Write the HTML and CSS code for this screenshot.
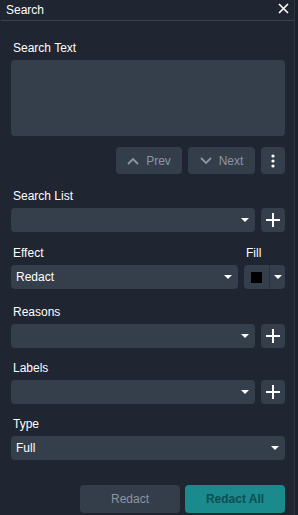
FILE: index.html
```html
<!DOCTYPE html>
<html lang="en">
  <head>
    <meta charset="UTF-8" />
    <meta name="viewport" content="width=device-width, initial-scale=1.0" />
    <title>Search</title>
    <link rel="stylesheet" href="styles.css">
  </head>
  <body>
    <div class="panel">
      <div class="header">
        <span class="title">Search</span>
        <button class="close" aria-label="Close">
          <svg width="11" height="11" viewBox="0 0 11 11"><path d="M1 1L10 10M10 1L1 10" stroke="#fff" stroke-width="1.6"/></svg>
        </button>
      </div>

      <div class="content">
        <!-- Search text -->
        <div class="label first">Search Text</div>
        <div class="textarea"></div>

        <div class="nav">
          <button class="nav-btn prev">
            <svg width="12" height="8" viewBox="0 0 12 8"><path d="M1 7L6 2L11 7" fill="none" stroke="#8b95a2" stroke-width="1.8"/></svg>
            Prev
          </button>
          <button class="nav-btn next">
            <svg width="12" height="8" viewBox="0 0 12 8"><path d="M1 1L6 6L11 1" fill="none" stroke="#8b95a2" stroke-width="1.8"/></svg>
            Next
          </button>
          <button class="square-btn kebab">
            <svg width="4" height="14" viewBox="0 0 4 14"><circle cx="2" cy="2" r="1.6" fill="#fff"/><circle cx="2" cy="7" r="1.6" fill="#fff"/><circle cx="2" cy="12" r="1.6" fill="#fff"/></svg>
          </button>
        </div>

        <!-- Search list -->
        <div class="label after-nav">Search List</div>
        <div class="row">
          <div class="select"><span></span><i class="caret"></i></div>
          <button class="square-btn plus"><svg width="14" height="14" viewBox="0 0 14 14"><path d="M7 0V14M0 7H14" stroke="#fff" stroke-width="2"/></svg></button>
        </div>

        <!-- Effect -->
        <div class="label-row">
          <span class="label">Effect</span>
          <span class="label fill-label">Fill</span>
        </div>
        <div class="row effect-row">
          <div class="select"><span>Redact</span><i class="caret"></i></div>
          <div class="fill-btn">
            <span class="swatch-wrap"><span class="swatch"></span></span>
            <span class="fill-caret"><i class="caret"></i></span>
          </div>
        </div>

        <!-- Reasons -->
        <div class="label">Reasons</div>
        <div class="row">
          <div class="select"><span></span><i class="caret"></i></div>
          <button class="square-btn plus"><svg width="14" height="14" viewBox="0 0 14 14"><path d="M7 0V14M0 7H14" stroke="#fff" stroke-width="2"/></svg></button>
        </div>

        <!-- Labels -->
        <div class="label">Labels</div>
        <div class="row">
          <div class="select"><span></span><i class="caret"></i></div>
          <button class="square-btn plus"><svg width="14" height="14" viewBox="0 0 14 14"><path d="M7 0V14M0 7H14" stroke="#fff" stroke-width="2"/></svg></button>
        </div>

        <!-- Type -->
        <div class="label">Type</div>
        <div class="row">
          <div class="select"><span>Full</span><i class="caret"></i></div>
        </div>

        <div class="footer">
          <button class="action redact">Redact</button>
          <button class="action redact-all">Redact All</button>
        </div>
      </div>
    </div>
  </body>
</html>
```

FILE: styles.css
```css
body {
  margin: 0;
  padding: 0;
  background-color: #1b212a;
  font-family: "Liberation Sans", Arial, sans-serif;
  font-size: 12px;
  color: #fff;
}

button {
  font-family: inherit;
  border: none;
  padding: 0;
  cursor: pointer;
}

.panel {
  width: 294px;
  height: 515px;
  background-color: #1f2531;
  border-right: 1px solid #2e3540;
}

.header {
  height: 20px;
  border-bottom: 1px solid #3a4351;
  display: flex;
  align-items: center;
  justify-content: space-between;
  padding: 0 5px 0 6px;
  margin-left: 1px;
}

.title {
  font-size: 12px;
  color: #fff;
  margin-left: -1px;
}

.close {
  background: none;
  display: flex;
  margin-top: -3px;
}

.content {
  padding: 20px 9px 0 11px;
}

.label {
  display: block;
  height: 14px;
  line-height: 14px;
  margin-left: 2px;
  margin-top: 13px;
  color: #fff;
}

.label.first {
  margin-top: 0;
}

.label.after-nav {
  margin-top: 15px;
}

.label-row {
  display: flex;
  justify-content: space-between;
  margin-top: 14px;
}

.label-row .label {
  margin-top: 0;
}

.fill-label {
  width: 39px;
}

.textarea {
  margin-top: 5px;
  height: 76px;
  background-color: #353f4c;
  border-radius: 4px;
}

.nav {
  display: flex;
  justify-content: flex-end;
  gap: 6px;
  margin-top: 11px;
}

.nav-btn {
  height: 27px;
  background-color: #343e4b;
  color: #8b95a2;
  font-size: 12px;
  border-radius: 4px;
  display: flex;
  align-items: center;
  justify-content: center;
  gap: 7px;
}

.prev {
  width: 66px;
}

.next {
  width: 67px;
}

.square-btn {
  width: 24px;
  background-color: #353f4c;
  border-radius: 4px;
  display: flex;
  align-items: center;
  justify-content: center;
}

.kebab {
  height: 27px;
}

.row {
  display: flex;
  gap: 6px;
  margin-top: 5px;
  height: 24px;
}

.effect-row + .label {
  margin-top: 16px;
}

.select {
  flex: 1;
  background-color: #353f4c;
  border-radius: 4px;
  display: flex;
  align-items: center;
  justify-content: space-between;
  padding: 0 6px 0 5px;
  font-size: 12px;
}

.caret {
  width: 0;
  height: 0;
  border-left: 4px solid transparent;
  border-right: 4px solid transparent;
  border-top: 4px solid #fff;
}

.plus {
  height: 24px;
}

.fill-btn {
  width: 41px;
  background-color: #353f4c;
  border-radius: 4px;
  display: flex;
}

.swatch-wrap {
  width: 25px;
  display: flex;
  align-items: center;
  justify-content: center;
  border-right: 1px solid #2a323d;
}

.swatch {
  width: 11px;
  height: 11px;
  background-color: #000;
}

.fill-caret {
  flex: 1;
  display: flex;
  align-items: center;
  justify-content: center;
}

.footer {
  display: flex;
  justify-content: flex-end;
  gap: 5px;
  margin-top: 25px;
}

.action {
  width: 100px;
  height: 28px;
  border-radius: 4px;
  font-size: 12px;
}

.redact {
  background-color: #343e4b;
  color: #8b95a2;
}

.redact-all {
  background-color: #1a8a8c;
  color: #0e4e53;
  font-weight: bold;
}
```
